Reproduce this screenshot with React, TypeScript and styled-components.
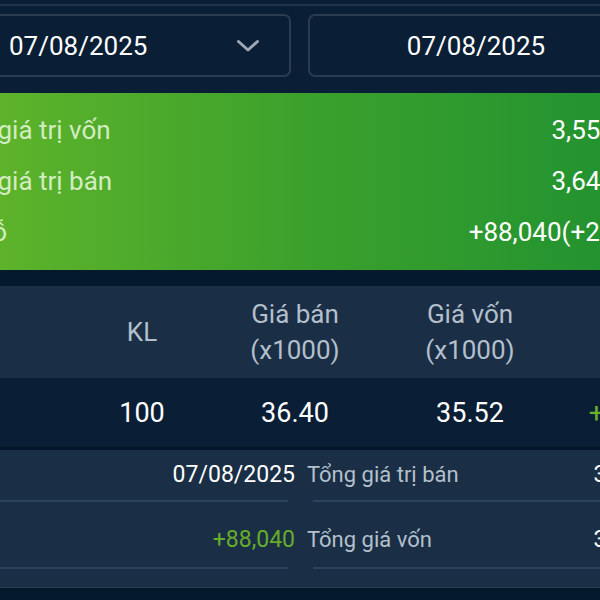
import React from "react";
import styled, { createGlobalStyle } from "styled-components";

const GlobalStyle = createGlobalStyle`
  html, body {
    margin: 0;
    padding: 0;
    background: #05192d;
    overflow: hidden;
    font-family: Roboto, "Noto Sans", "Liberation Sans", sans-serif;
  }
`;

const Screen = styled.div`
  width: 800px;
  margin-left: -83px;
  display: flex;
  flex-direction: column;
  background: #05192d;
`;

const TopArea = styled.div`
  background: #0a1e35;
  padding-bottom: 16px;
`;

const TopEdge = styled.div`
  height: 4px;
  border-bottom: 2px solid #1f3349;
`;

const DateRow = styled.div`
  display: grid;
  grid-template-columns: 336px 336px;
  gap: 17px;
  padding: 8px 0 0 38px;
`;

const DateBox = styled.div<{ $center?: boolean }>`
  height: 63px;
  box-sizing: border-box;
  border: 2px solid #293c51;
  border-radius: 7px;
  display: flex;
  align-items: center;
  justify-content: ${(p) => (p.$center ? "center" : "space-between")};
  padding: ${(p) => (p.$center ? "0" : "0 29px 0 52px")};
  color: #ffffff;
  font-size: 26px;
`;

const Chevron = () => (
  <svg width="24" height="14" viewBox="0 0 24 14">
    <path
      d="M2.5 2.5 L12 11 L21.5 2.5"
      fill="none"
      stroke="#9ea8b3"
      strokeWidth="3"
      strokeLinecap="round"
      strokeLinejoin="round"
    />
  </svg>
);

const ProfitPanel = styled.div`
  height: 177px;
  box-sizing: border-box;
  padding: 12px 53px 12px 16px;
  background: linear-gradient(90deg, #66b82a 0%, #3aa02c 50%, #1a8e31 100%);
`;

const ProfitRow = styled.div`
  display: flex;
  justify-content: space-between;
  height: 51px;
  line-height: 51px;
  font-size: 26px;
`;

const ProfitLabel = styled.span`
  color: #d3ecc2;
`;

const ProfitValue = styled.span`
  color: #ffffff;
`;

const Gap = styled.div`
  height: 16px;
`;

const TABLE_COLS = "143px 164px 142px 208px 126px 1fr";

const HeadRow = styled.div`
  display: grid;
  grid-template-columns: ${TABLE_COLS};
  align-items: center;
  height: 92px;
  background: #1a2e46;
  color: #b3bfcb;
  font-size: 26px;
  line-height: 36px;
`;

const DataRow = styled.div`
  display: grid;
  grid-template-columns: ${TABLE_COLS};
  align-items: center;
  height: 69px;
  background: #0a1e35;
  color: #ffffff;
  font-size: 27px;
`;

const Cell = styled.div<{ $green?: boolean; $left?: boolean }>`
  text-align: ${(p) => (p.$left ? "left" : "center")};
  padding-left: ${(p) => (p.$left ? "16px" : "0")};
  color: ${(p) => (p.$green ? "#69b22a" : "inherit")};
`;

const Divider = styled.div`
  height: 3px;
  background: #04172a;
`;

const Summary = styled.div`
  display: grid;
  grid-template-columns: 383px 1fr;
  background: #1a2e45;
  padding-bottom: 18px;
  border-bottom: 1px solid #2a3e55;
`;

const SummaryCol = styled.div<{ $right?: boolean }>`
  display: flex;
  flex-direction: column;
  --label-pad: ${(p) => (p.$right ? "7px" : "16px")};
  --value-pad: ${(p) => (p.$right ? "24px" : "5px")};
  --line-l: ${(p) => (p.$right ? "13px" : "0")};
  --line-r: ${(p) => (p.$right ? "0" : "12px")};
`;

const SummaryRow = styled.div<{ $pt: number; $pb: number }>`
  display: flex;
  justify-content: space-between;
  align-items: center;
  padding: ${(p) => `${p.$pt}px var(--value-pad) ${p.$pb}px var(--label-pad)`};
  line-height: 30px;
`;

const SummaryLabel = styled.span`
  color: #b4c0cc;
  font-size: 22px;
`;

const SummaryValue = styled.span<{ $green?: boolean }>`
  color: ${(p) => (p.$green ? "#66ad2a" : "#ffffff")};
  font-size: 23px;
`;

const Line = styled.div`
  height: 2px;
  background: #2b445d;
  margin: 0 var(--line-r) 0 var(--line-l);
`;

const Bottom = styled.div`
  height: 20px;
  background: #05192d;
`;

export default function App() {
  return (
    <>
      <GlobalStyle />
      <Screen>
        <TopArea>
          <TopEdge />
          <DateRow>
            <DateBox>
              <span>07/08/2025</span>
              <Chevron />
            </DateBox>
            <DateBox $center>
              <span>07/08/2025</span>
            </DateBox>
          </DateRow>
        </TopArea>

        <ProfitPanel>
          <ProfitRow>
            <ProfitLabel>Tổng giá trị vốn</ProfitLabel>
            <ProfitValue>3,551,960</ProfitValue>
          </ProfitRow>
          <ProfitRow>
            <ProfitLabel>Tổng giá trị bán</ProfitLabel>
            <ProfitValue>3,640,000</ProfitValue>
          </ProfitRow>
          <ProfitRow>
            <ProfitLabel>Lãi/Lỗ</ProfitLabel>
            <ProfitValue>+88,040(+2.48%)</ProfitValue>
          </ProfitRow>
        </ProfitPanel>

        <Gap />

        <HeadRow>
          <Cell $left>Mã</Cell>
          <Cell>KL</Cell>
          <Cell>
            Giá bán
            <br />
            (x1000)
          </Cell>
          <Cell>
            Giá vốn
            <br />
            (x1000)
          </Cell>
          <Cell>Lãi/lỗ</Cell>
          <Cell />
        </HeadRow>
        <DataRow>
          <Cell $left>HPG</Cell>
          <Cell>100</Cell>
          <Cell>36.40</Cell>
          <Cell>35.52</Cell>
          <Cell $green>+88,040</Cell>
          <Cell />
        </DataRow>

        <Divider />

        <Summary>
          <SummaryCol>
            <SummaryRow $pt={10} $pb={10}>
              <SummaryLabel>Ngày</SummaryLabel>
              <SummaryValue>07/08/2025</SummaryValue>
            </SummaryRow>
            <Line />
            <SummaryRow $pt={23} $pb={12}>
              <SummaryLabel>Lãi/lỗ</SummaryLabel>
              <SummaryValue $green>+88,040</SummaryValue>
            </SummaryRow>
            <Line />
          </SummaryCol>
          <SummaryCol $right>
            <SummaryRow $pt={10} $pb={10}>
              <SummaryLabel>Tổng giá trị bán</SummaryLabel>
              <SummaryValue>3,640,000</SummaryValue>
            </SummaryRow>
            <Line />
            <SummaryRow $pt={23} $pb={12}>
              <SummaryLabel>Tổng giá vốn</SummaryLabel>
              <SummaryValue>3,551,960</SummaryValue>
            </SummaryRow>
            <Line />
          </SummaryCol>
        </Summary>

        <Bottom />
      </Screen>
    </>
  );
}
